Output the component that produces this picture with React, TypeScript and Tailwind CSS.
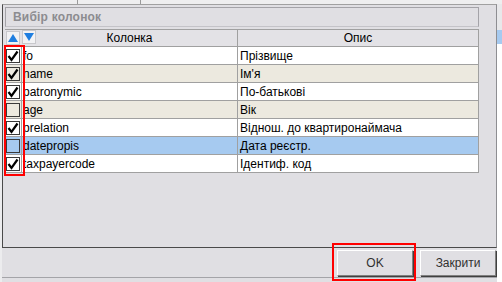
import React from 'react';

const ROWS = [
  { name: 'fo', desc: 'Прізвище', on: true, bg: 'bg-white' },
  { name: 'name', desc: "Ім'я", on: true, bg: 'bg-[#ece9df]' },
  { name: 'patronymic', desc: 'По-батькові', on: true, bg: 'bg-white' },
  { name: 'age', desc: 'Вік', on: false, bg: 'bg-[#ece9df]' },
  { name: 'prelation', desc: 'Віднош. до квартиронаймача', on: true, bg: 'bg-white' },
  { name: 'datepropis', desc: 'Дата реєстр.', on: false, bg: 'bg-[#a6caf0]' },
  { name: 'taxpayercode', desc: 'Ідентиф. код', on: true, bg: 'bg-white' },
];

function Check({ on }: { on: boolean }) {
  return (
    <div className="w-[14px] h-[14px] border border-[#3a3a3a] flex items-center justify-center">
      {on && (
        <svg width="12" height="12" viewBox="0 0 12 12">
          <path d="M1.5 6 L4.5 10 L10.5 1.5" fill="none" stroke="#000" strokeWidth="2.2" />
        </svg>
      )}
    </div>
  );
}

function Arrow({ up }: { up: boolean }) {
  return (
    <div className="w-[14px] h-[14px] bg-[#f2f2f4] border border-[#c8c8cc] flex items-center justify-center">
      <svg width="10" height="8" viewBox="0 0 10 8">
        <path d={up ? 'M5 0 L10 8 L0 8 Z' : 'M0 0 L10 0 L5 8 Z'} fill="#1f7ee0" />
      </svg>
    </div>
  );
}

export default function App() {
  return (
    <div
      className="relative w-[502px] h-[282px] overflow-hidden bg-[#ececee] text-[12px] text-black"
      style={{ fontFamily: '"Liberation Sans", Arial, sans-serif' }}
    >
      {/* strip of the window behind */}
      <div className="h-[4px] flex bg-[#eeeeef]">
        <div className="w-[77px]" />
        <div className="w-px bg-[#9a9a9a]" />
        <div className="w-[62px]" />
        <div className="w-px bg-[#9a9a9a]" />
      </div>

      <div className="flex h-[278px]">
        <div className="w-[2px]" />

        {/* dialog */}
        <div className="w-[495px] flex flex-col bg-[#e0dfe3]">
          <div className="h-[244px] border-l border-b border-t border-r border-l-[#4a4a4a] border-b-[#4a4a4a] border-t-[#a0a0a0] border-r-[#8e8e92] flex flex-col">
            {/* title */}
            <div className="ml-[2px] mt-[2px] w-[474px] h-[20px] border border-[#a4a3a8] border-b-[#c4c3c8] flex items-center pl-[7px] font-bold text-[#8c8c90] tracking-[0.2px]">
              Вибір колонок
            </div>

            {/* grid */}
            <div className="ml-[2px] mt-[2px] w-[474px] flex flex-col border-r border-[#a0a0a0]">
              <div className="h-[18px] flex border-y border-[#a0a0a0] bg-[#e3e2e6]">
                <div className="w-[17px] flex items-center pl-[1px]">
                  <Arrow up />
                </div>
                <div className="relative w-[216px] flex items-center justify-center border-r border-[#a0a0a0]">
                  <div className="absolute left-0 top-0">
                    <Arrow up={false} />
                  </div>
                  Колонка
                </div>
                <div className="flex-1 flex items-center justify-center">Опис</div>
              </div>
              {ROWS.map((r) => (
                <div key={r.name} className={`h-[18px] flex border-b border-[#a0a0a0] ${r.bg}`}>
                  <div className="w-[17px] flex items-center pl-[1px] border-r border-[#a0a0a0]">
                    <Check on={r.on} />
                  </div>
                  <div className="w-[216px] flex items-center pl-[1px] border-r border-[#a0a0a0]">{r.name}</div>
                  <div className="flex-1 flex items-center pl-[2px]">{r.desc}</div>
                </div>
              ))}
            </div>
          </div>

          {/* buttons */}
          <div className="h-[30px] flex items-center justify-end gap-[7px] pr-[1px] border-b border-[#a4a4a8]">
            <button className="w-[76px] h-[26px] bg-[#e0dfe3] border border-t-white border-l-white border-b-[#808080] border-r-[#808080] shadow-[1px_1px_0_#404040] text-[12px] font-normal text-[#303030]">
              OK
            </button>
            <button className="w-[76px] h-[26px] bg-[#e0dfe3] border border-t-white border-l-white border-b-[#808080] border-r-[#808080] shadow-[1px_1px_0_#404040] text-[12px] font-normal text-[#303030]">
              Закрити
            </button>
          </div>
        </div>

        {/* window behind, right edge */}
        <div className="flex-1 flex flex-col bg-white">
          <div className="h-[26px] bg-[#e8e8ea]" />
          <div className="h-[14px] bg-[#a6caf0]" />
        </div>
      </div>

      {/* red annotation frames */}
      <div className="absolute left-[4px] top-[45px] w-[21px] h-[131px] border-2 border-[#ff0000]" />
      <div className="absolute left-[332px] top-[243px] w-[84px] h-[38px] border-2 border-[#ff0000]" />
    </div>
  );
}
